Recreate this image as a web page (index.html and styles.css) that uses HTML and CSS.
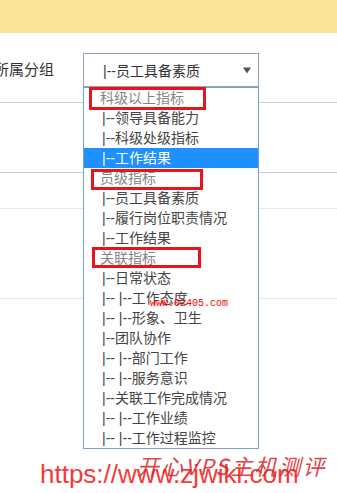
FILE: index.html
```html
<!DOCTYPE html>
<html lang="zh-CN">
<head>
    <meta charset="UTF-8">
    <meta name="viewport" content="width=device-width, initial-scale=1.0">
    <title>所属分组</title>
    <link rel="stylesheet" href="styles.css">
</head>
<body>
    <div class="topbar"></div>

    <div class="form">
        <div class="row row-first">
            <label class="label">所属分组</label>
            <div class="picker">
                <div class="select">
                    <span>|--员工具备素质</span>
                    <svg class="arrow" width="8" height="7" viewBox="0 0 8 7"><path d="M0 0.5h8L4 6.5z" fill="#555"/></svg>
                </div>
                <ul class="options">
                    <li class="group">科级以上指标</li>
                    <li>|--领导具备能力</li>
                    <li>|--科级处级指标</li>
                    <li class="active">|--工作结果</li>
                    <li class="group">员级指标</li>
                    <li>|--员工具备素质</li>
                    <li>|--履行岗位职责情况</li>
                    <li>|--工作结果</li>
                    <li class="group">关联指标</li>
                    <li>|--日常状态</li>
                    <li>|--&nbsp;|--工作态度</li>
                    <li>|--&nbsp;|--形象、卫生</li>
                    <li>|--团队协作</li>
                    <li>|--&nbsp;|--部门工作</li>
                    <li>|--&nbsp;|--服务意识</li>
                    <li>|--关联工作完成情况</li>
                    <li>|--&nbsp;|--工作业绩</li>
                    <li>|--&nbsp;|--工作过程监控</li>
                </ul>
            </div>
        </div>
        <div class="row row-tall"></div>
        <div class="row row-short"></div>
        <div class="row row-mid"></div>
    </div>

    <!-- annotation boxes and watermarks drawn over the screenshot -->
    <div class="mark mark-1"></div>
    <div class="mark mark-2"></div>
    <div class="mark mark-3"></div>
    <div class="stamp">www.02405.com</div>
    <div class="site">https://www.zjwiki.com</div>
    <div class="brand">开心VPS主机测评</div>
</body>
</html>
```

FILE: styles.css
```css
html, body {
    min-height: 493px;
}
body {
    margin: 0;
    font-family: "Liberation Sans", "Noto Sans CJK SC", sans-serif;
    font-size: 14px;
    color: #333;
    background: #fff;
}
.topbar {
    height: 33px;
    background: #f8e396;
}
.row {
    display: flex;
    align-items: center;
    border-bottom: 1px solid #c5ccdb;
}
.row-first {
    padding: 20px 0 15px;
}
.row-tall {
    height: 69px;
}
.row-short {
    height: 35px;
    border-bottom-color: #e5e7eb;
}
.row-mid {
    height: 89px;
    border-bottom-color: #e5e7eb;
}
.label {
    flex: 0 0 89px;
    margin-left: -6px;
    font-size: 15px;
    line-height: 34px;
    color: #333;
    white-space: nowrap;
}
.picker {
    position: relative;
    width: 176px;
}
.select {
    box-sizing: border-box;
    height: 34px;
    display: flex;
    align-items: center;
    justify-content: space-between;
    padding: 0 7px 0 19px;
    border: 1px solid #97a2b7;
    background: #fff;
    color: #333;
}
.options {
    position: absolute;
    top: 100%;
    left: 0;
    z-index: 2;
    box-sizing: border-box;
    width: 176px;
    margin: 0;
    padding: 0;
    list-style: none;
    background: #fff;
    border: 1px solid #7d9cd3;
}
.options li {
    height: 20px;
    line-height: 20px;
    padding-left: 18px;
    color: #444;
    white-space: nowrap;
}
.options .group {
    padding-left: 16px;
    color: #858585;
}
.options .active {
    background: #1e90ff;
    color: #fff;
}
.mark {
    position: absolute;
    z-index: 3;
    box-sizing: border-box;
    border: 3px solid #e8141c;
}
.mark-1 {
    left: 89px;
    top: 87px;
    width: 117px;
    height: 23px;
}
.mark-2 {
    left: 91px;
    top: 169px;
    width: 112px;
    height: 21px;
}
.mark-3 {
    left: 92px;
    top: 247px;
    width: 109px;
    height: 21px;
}
.stamp {
    position: absolute;
    z-index: 3;
    left: 150px;
    top: 298px;
    font-family: "Liberation Mono", monospace;
    font-size: 10px;
    line-height: 12px;
    color: #f00;
}
.site {
    position: absolute;
    z-index: 3;
    left: 40px;
    top: 459px;
    font-size: 26px;
    line-height: 30px;
    color: #f43a3a;
}
.brand {
    position: absolute;
    z-index: 4;
    left: 137px;
    top: 453px;
    font-family: "Noto Sans CJK SC", sans-serif;
    font-size: 22px;
    line-height: 24px;
    font-style: italic;
    letter-spacing: 2px;
    color: #d9262b;
    opacity: 0.85;
}
```
